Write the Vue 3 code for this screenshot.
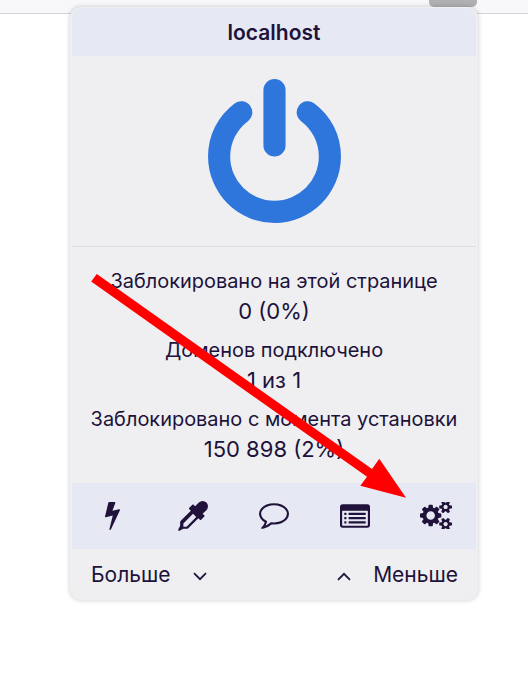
<script setup>
const stats = [
  { label: 'Заблокировано на этой странице', value: '0 (0%)' },
  { label: 'Доменов подключено', value: '1 из 1' },
  { label: 'Заблокировано с момента установки', value: '150 898 (2%)' },
]
const smallCog = 'v140 q0,16 -149,31 -12,27 -30,52 51,113 51,138 0,4 -4,7 -122,71 -124,71 -8,0 -46,-47 -38,-47 -52,-68 -20,2 -30,2 -10,0 -30,-2 -14,21 -52,68 -38,47 -46,47 -2,0 -124,-71 -4,-3 -4,-7 0,-25 51,-138 -18,-25 -30,-52 -149,-15 -149,-31 v-140 q0,-16 149,-31 13,-29 30,-52 -51,-113 -51,-138 0,-4 4,-7 4,-2 35,-20 31,-18 59,-34 28,-16 30,-16 8,0 46,46.5 38,46.5 52,67.5 20,-2 30,-2 10,0 30,2 51,-71 92,-112 l6,-2 q4,0 124,70 4,3 4,7 0,25 -51,138 17,23 30,52 149,15 149,31 z'
const hole = 'q0,-52 -38,-90 -38,-38 -90,-38 -52,0 -90,38 -38,38 -38,90 0,53 37.5,90.5 37.5,37.5 90.5,37.5 53,0 90.5,-37.5 37.5,-37.5 37.5,-90.5 z'
const cogs = `M896,896 q0,-106 -75,-181 -75,-75 -181,-75 -106,0 -181,75 -75,75 -75,181 0,106 75,181 75,75 181,75 106,0 181,-75 75,-75 75,-181 z M1664,1408 ${hole} M1664,384 ${hole} M1280,805 v185 q0,10 -7,19.5 -7,9.5 -16,10.5 l-155,24 q-11,35 -32,76 34,48 90,115 7,11 7,20 0,12 -7,19 -23,30 -82.5,89.5 -59.5,59.5 -78.5,59.5 -11,0 -21,-7 l-115,-90 q-37,19 -77,31 -11,108 -23,155 -7,24 -30,24 h-186 q-11,0 -20,-7.5 -9,-7.5 -10,-17.5 l-23,-153 q-34,-10 -75,-31 l-118,89 q-7,7 -20,7 -11,0 -21,-8 -144,-133 -144,-160 0,-9 7,-19 10,-14 41,-53 31,-39 47,-61 -23,-44 -35,-82 l-152,-24 q-10,-1 -17,-9.5 -7,-8.5 -7,-19.5 v-185 q0,-10 7,-19.5 7,-9.5 16,-10.5 l155,-24 q11,-35 32,-76 -34,-48 -90,-115 -7,-11 -7,-20 0,-12 7,-20 22,-30 82,-89 60,-59 79,-59 11,0 21,7 l115,90 q34,-18 77,-32 11,-108 23,-154 7,-24 30,-24 h186 q11,0 20,7.5 9,7.5 10,17.5 l23,153 q34,10 75,31 l118,-89 q8,-7 20,-7 11,0 21,8 144,133 144,160 0,8 -7,19 -12,16 -42,54 -30,38 -45,60 23,48 34,82 l152,23 q10,2 17,10.5 7,8.5 7,19.5 z M1920,1338 ${smallCog} M1920,314 ${smallCog}`
</script>

<template>
  <div class="page">
    <div class="toolbar"></div>
    <div class="toolbar-button"></div>
    <main class="popup">
      <header class="host">localhost</header>
      <div class="switch">
        <svg class="power" viewBox="0 0 1536 1664">
          <path d="m 1536,896 q 0,156 -61,298 -61,142 -164,245 -103,103 -245,164 -142,61 -298,61 -156,0 -298,-61 Q 328,1542 225,1439 122,1336 61,1194 0,1052 0,896 0,714 80.5,553 161,392 307,283 q 43,-32 95.5,-25 52.5,7 83.5,50 32,42 24.5,94.5 Q 503,455 461,487 363,561 309.5,668 256,775 256,896 q 0,104 40.5,198.5 40.5,94.5 109.5,163.5 69,69 163.5,109.5 94.5,40.5 198.5,40.5 104,0 198.5,-40.5 Q 1061,1327 1130,1258 1199,1189 1239.5,1094.5 1280,1000 1280,896 1280,775 1226.5,668 1173,561 1075,487 1033,455 1025.5,402.5 1018,350 1050,308 q 31,-43 84,-50 53,-7 95,25 146,109 226.5,270 80.5,161 80.5,343 z m -640,-768 0,640 q 0,52 -38,90 -38,38 -90,38 -52,0 -90,-38 -38,-38 -38,-90 l 0,-640 q 0,-52 38,-90 38,-38 90,-38 52,0 90,38 38,38 38,90 z" />
        </svg>
      </div>
      <section class="stats">
        <div v-for="s in stats" :key="s.label" class="stat">
          <div class="label">{{ s.label }}</div>
          <div class="value">{{ s.value }}</div>
        </div>
      </section>
      <nav class="tools">
        <span class="tool">
          <svg class="bolt" viewBox="0 0 896 1664"><path d="m 885,438 q 18,20 7,44 l -540,1157 q -13,25 -42,25 -4,0 -14,-2 -17,-5 -25.5,-19 -8.5,-14 -4.5,-30 l 197,-808 -406,101 q -4,1 -12,1 -18,0 -31,-11 Q -4,881 1,857 L 202,32 q 4,-14 16,-23 12,-9 28,-9 l 328,0 q 19,0 32,12.5 13,12.5 13,29.5 0,8 -5,18 l -171,463 396,-98 q 8,-2 12,-2 19,0 34,15 z" /></svg>
        </span>
        <span class="tool">
          <svg class="dropper" viewBox="0 0 1792 1792"><path d="m1698,94 q94,94 94,226.5 0,132.5 -94,225.5 l-225,223 104,104 q10,10 10,23 0,13 -10,23 l-210,210 q-10,10 -23,10 -13,0 -23,-10 l-105,-105 -603,603 q-37,37 -90,37 h-203 l-256,128 -64,-64 128,-256 v-203 q0,-53 37,-90 l603,-603 -105,-105 q-10,-10 -10,-23 0,-13 10,-23 l210,-210 q10,-10 23,-10 13,0 23,10 l104,104 223,-225 q93,-94 225.5,-94 132.5,0 225.5,94 z M512,1536 l576,-576 -192,-192 -576,576 v192 z" /></svg>
        </span>
        <span class="tool">
          <svg class="comment" viewBox="0 0 1792 1536"><path d="m 896,128 q -204,0 -381.5,69.5 Q 337,267 232.5,385 128,503 128,640 128,752 199.5,853.5 271,955 401,1029 l 87,50 -27,96 q -24,91 -70,172 152,-63 275,-171 l 43,-38 57,6 q 69,8 130,8 204,0 381.5,-69.5 Q 1455,1013 1559.5,895 1664,777 1664,640 1664,503 1559.5,385 1455,267 1277.5,197.5 1100,128 896,128 z m 896,512 q 0,174 -120,321.5 -120,147.5 -326,233 -206,85.5 -450,85.5 -70,0 -145,-8 -198,175 -460,242 -49,14 -114,22 h -5 q -15,0 -27,-10.5 -12,-10.5 -16,-27.5 v -1 q -3,-4 -0.5,-12 2.5,-8 2,-10 -0.5,-2 4.5,-9.5 l 6,-9 7,-8.5 8,-9 q 7,-8 31,-34.5 24,-26.5 34.5,-38 10.5,-11.5 31,-39.5 20.5,-28 32.5,-51 12,-23 27,-59 15,-36 26,-76 Q 181,1052 90.5,921 0,790 0,640 0,466 120,318.5 240,171 446,85.5 652,0 896,0 q 244,0 450,85.5 206,85.5 326,233 120,147.5 120,321.5 z" /></svg>
        </span>
        <span class="tool">
          <svg class="list" viewBox="0 0 1792 1408">
            <path fill-rule="evenodd" d="M160 0H1632Q1792 0 1792 160V1248Q1792 1408 1632 1408H160Q0 1408 0 1248V160Q0 0 160 0ZM128 416V1248Q128 1280 160 1280H1632Q1664 1280 1664 1248V416Q1664 384 1632 384H160Q128 384 128 416Z" />
            <g v-for="y in [512, 768, 1024]" :key="y">
              <rect x="256" :y="y" width="128" height="128" rx="32" />
              <rect x="512" :y="y" width="1024" height="128" rx="32" />
            </g>
          </svg>
        </span>
        <span class="tool">
          <svg class="cogs" viewBox="0 96 1920 1600"><path fill-rule="evenodd" :d="cogs" /></svg>
        </span>
      </nav>
      <footer class="more-less">
        <span class="toggle">Больше
          <svg class="chevron" viewBox="0 0 14 9"><path d="M1 1.2L7 7.2L13 1.2" /></svg>
        </span>
        <span class="toggle">
          <svg class="chevron" viewBox="0 0 14 9"><path d="M1 7.8L7 1.8L13 7.8" /></svg>
          Меньше</span>
      </footer>
    </main>
    <svg class="arrow" viewBox="0 0 528 679">
      <polygon points="96.8,274 372,469 379.3,458.7 406,497.7 360.3,485.7 367,476.8 91.2,281.6" />
    </svg>
  </div>
</template>

<style>
body { background: #fff; }
</style>

<style scoped>
.page {
  position: relative;
  width: 528px;
  height: 679px;
  overflow: hidden;
  font-family: Inter, "Noto Sans", sans-serif;
  color: #20123a;
}
.toolbar {
  box-sizing: border-box;
  height: 14px;
  background: #f8f8fb;
  border-bottom: 1px solid #d3d3d8;
}
.toolbar-button {
  position: absolute;
  top: -8px;
  left: 429px;
  width: 48px;
  height: 15px;
  border-radius: 5px;
  background: #b0b0b2;
}
.popup {
  box-sizing: border-box;
  position: relative;
  width: 408px;
  height: 593px;
  margin: -7px 0 0 70px;
  padding: 1px 2px 0 2px;
  border-radius: 11px;
  background: #efeff1;
  box-shadow: 0 0 5px rgba(0, 0, 0, 0.22);
  overflow: hidden;
}
.host {
  height: 48px;
  border-radius: 9px 9px 0 0;
  background: #e6e9f3;
  font-size: 21px;
  font-weight: 600;
  line-height: 50px;
  text-align: center;
}
.switch {
  box-sizing: border-box;
  display: flex;
  justify-content: center;
  height: 191px;
  padding-top: 23px;
  border-bottom: 1px solid #dfdfe3;
}
.power {
  width: 133px;
  height: 144px;
  fill: #2e76dc;
}
.stats {
  box-sizing: border-box;
  height: 236px;
  padding-top: 19px;
  text-align: center;
  white-space: nowrap;
}
.stat { height: 69px; }
.label {
  font-size: 19.95px;
  line-height: 30px;
}
.value {
  font-size: 22px;
  line-height: 30px;
}
.tools {
  box-sizing: border-box;
  display: flex;
  height: 66px;
  padding-bottom: 1px;
  background: #e6e9f3;
}
.tool {
  display: flex;
  flex: 1;
  align-items: center;
  justify-content: center;
}
.tool svg { fill: #20123a; }
.bolt { width: 15px; height: 28px; }
.dropper { width: 30px; height: 30px; }
.comment { width: 30px; height: 26px; }
.list { width: 30px; height: 24px; }
.cogs { width: 32px; height: 27px; }
.more-less {
  display: flex;
  align-items: center;
  justify-content: space-between;
  height: 51px;
  padding: 0 18px 0 19px;
  font-size: 21px;
}
.toggle {
  display: flex;
  align-items: center;
  gap: 22.5px;
}
.chevron {
  width: 14px;
  height: 9px;
  margin-top: 3px;
  fill: none;
  stroke: #20123a;
  stroke-width: 1.8;
}
.arrow {
  position: absolute;
  top: 0;
  left: 0;
  width: 528px;
  height: 679px;
  fill: #f00;
}
</style>
